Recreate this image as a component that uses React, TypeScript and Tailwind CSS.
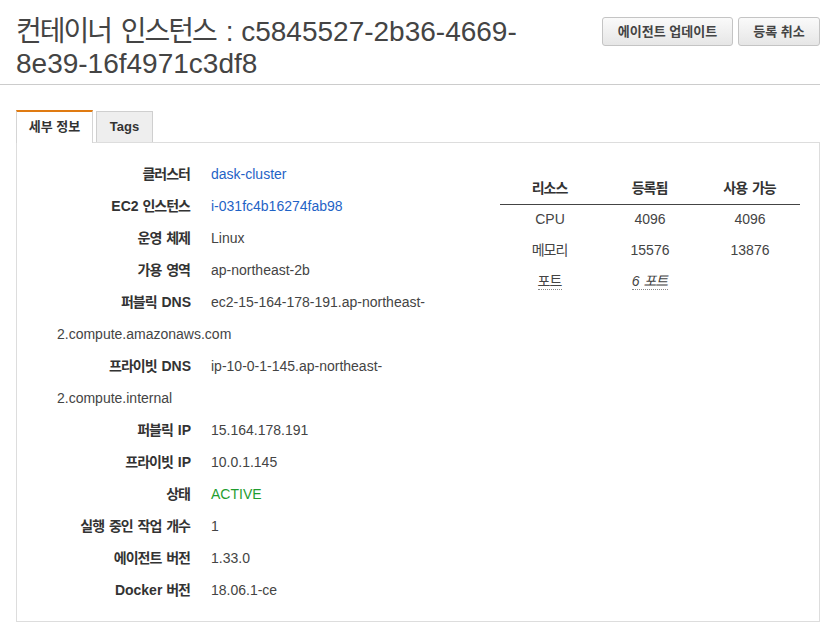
import React from "react";

const HANGUL = /([\uAC00-\uD7A3]+)/;

function K({ t, c }: { t: string; c: string }) {
  return (
    <>
      {t.split(HANGUL).map((p, i) =>
        HANGUL.test(p) ? (
          <span key={i} className={c}>
            {p}
          </span>
        ) : (
          <React.Fragment key={i}>{p}</React.Fragment>
        )
      )}
    </>
  );
}

type Row = { label: string; value: React.ReactNode; kind?: "link" | "green" };

const rows: Row[] = [
  { label: "클러스터", value: "dask-cluster", kind: "link" },
  { label: "EC2 인스턴스", value: "i-031fc4b16274fab98", kind: "link" },
  { label: "운영 체제", value: "Linux" },
  { label: "가용 영역", value: "ap-northeast-2b" },
  {
    label: "퍼블릭 DNS",
    value: (
      <>
        ec2-15-164-178-191.ap-northeast-<wbr />2.compute.amazonaws.com
      </>
    ),
  },
  {
    label: "프라이빗 DNS",
    value: (
      <>
        ip-10-0-1-145.ap-northeast-<wbr />2.compute.internal
      </>
    ),
  },
  { label: "퍼블릭 IP", value: "15.164.178.191" },
  { label: "프라이빗 IP", value: "10.0.1.145" },
  { label: "상태", value: "ACTIVE", kind: "green" },
  { label: "실행 중인 작업 개수", value: "1" },
  { label: "에이전트 버전", value: "1.33.0" },
  { label: "Docker 버전", value: "18.06.1-ce" },
];

export default function App() {
  return (
    <div className="min-h-[634px] w-[837px] bg-white font-['Liberation_Sans','Noto_Sans_CJK_KR',sans-serif] text-[#444]">
      <div className="w-[820px]">
        {/* Header */}
        <div className="flex items-start border-b border-[#cccccc] pb-[4px] pl-4 pt-4">
          <h1 className="min-w-0 flex-1 pr-[10px] text-[28px] font-normal leading-[32px] text-[#444]">
            <K t="컨테이너 인스턴스" c="mr-[2px] tracking-[-2px]" /> : c5845527-2b36-4669-
            <br />
            8e39-16f4971c3df8
          </h1>
          <div className="mt-[1px] flex shrink-0 gap-[5px]">
            <button className="h-[29px] w-[131px] rounded-[3px] border border-[#c4c4c4] bg-linear-to-b from-[#fafafa] to-[#e6e6e6] text-[13px] font-bold text-[#444]">
              에이전트 업데이트
            </button>
            <button className="h-[29px] w-[82px] rounded-[3px] border border-[#c4c4c4] bg-linear-to-b from-[#fafafa] to-[#e6e6e6] text-[13px] font-bold text-[#444]">
              등록 취소
            </button>
          </div>
        </div>

        {/* Tabs + panel */}
        <div className="ml-4 mt-[25px]">
          <div className="relative z-10 -mb-px flex items-start">
            <div className="flex h-[33px] w-[77px] items-center justify-center border-x border-t-2 border-x-[#d5d5d5] border-t-[#e07b12] bg-white pb-[1px] text-[13px] font-bold text-[#333]">
              세부 정보
            </div>
            <div className="ml-[3px] mt-[1px] flex h-[31px] w-[57px] items-center justify-center border border-b-0 border-[#cfcfcf] bg-[#eeeeee] text-[13px] font-bold text-[#333]">
              Tags
            </div>
          </div>
          <div className="flex border border-[#dddddd] pb-[15px] pl-[40px] pt-[15px]">
            <div className="w-[413px] shrink-0">
              {rows.map((r, i) => (
                <div key={i} className="text-[14px] leading-[32px] text-[#444]">
                  <span className="mr-[20px] inline-block w-[134px] whitespace-nowrap text-right font-bold text-[#333]">
                    <K t={r.label} c="mr-[1px] tracking-[-1px]" />
                  </span>
                  <span
                    className={
                      r.kind === "link"
                        ? "text-[#1f63c6]"
                        : r.kind === "green"
                        ? "text-[#1f9d2f]"
                        : "text-[#444]"
                    }
                  >
                    {r.value}
                  </span>
                </div>
              ))}
            </div>
            <div className="ml-[30px] mt-[15px]">
              <table className="w-[300px] text-[14px] text-[#444]">
                <thead>
                  <tr className="border-b border-[#444]">
                    <th className="h-[31px] w-[100px] text-center font-bold text-[#333]">
                      <K t="리소스" c="mr-[1px] tracking-[-1px]" />
                    </th>
                    <th className="h-[31px] w-[100px] text-center font-bold text-[#333]">
                      <K t="등록됨" c="mr-[1px] tracking-[-1px]" />
                    </th>
                    <th className="h-[31px] w-[100px] text-center font-bold text-[#333]">
                      <K t="사용 가능" c="mr-[1px] tracking-[-1px]" />
                    </th>
                  </tr>
                </thead>
                <tbody>
                  <tr>
                    <td className="h-[31px] text-center">CPU</td>
                    <td className="h-[31px] text-center">4096</td>
                    <td className="h-[31px] text-center">4096</td>
                  </tr>
                  <tr>
                    <td className="h-[31px] text-center">
                      <K t="메모리" c="mr-[1px] tracking-[-1px]" />
                    </td>
                    <td className="h-[31px] text-center">15576</td>
                    <td className="h-[31px] text-center">13876</td>
                  </tr>
                  <tr>
                    <td className="h-[31px] text-center">
                      <span className="border-b border-dotted border-[#888]">
                        <K t="포트" c="mr-[1px] tracking-[-1px]" />
                      </span>
                    </td>
                    <td className="h-[31px] text-center italic">
                      <span className="border-b border-dotted border-[#888]">
                        6 <K t="포트" c="mr-[1px] tracking-[-1px]" />
                      </span>
                    </td>
                    <td className="h-[31px] text-center"></td>
                  </tr>
                </tbody>
              </table>
            </div>
          </div>
        </div>
      </div>
    </div>
  );
}
